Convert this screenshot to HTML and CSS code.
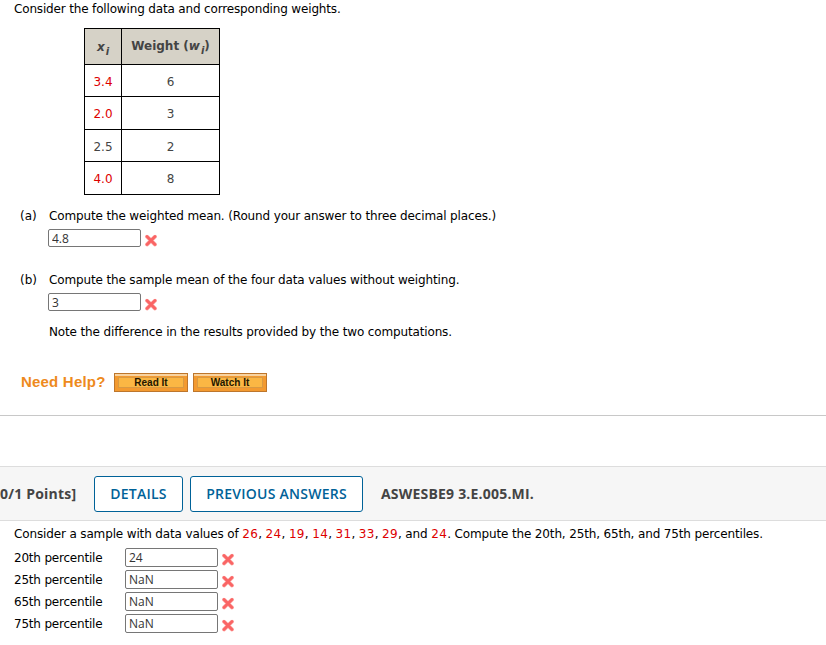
FILE: index.html
```html
<!DOCTYPE html>
<html lang="en">
<head>
    <meta charset="UTF-8">
    <meta name="viewport" content="width=device-width, initial-scale=1.0">
    <title>Assignment Questions</title>
    <link rel="stylesheet" href="styles.css">
</head>
<body>
    <svg class="symbols" width="0" height="0">
        <symbol id="wrong" viewBox="0 0 12 13">
            <path d="M2 2.7 L10 10.5 M10 2.7 L2 10.5" fill="none" stroke="#fcb5b2" stroke-width="3.9" stroke-linecap="round"/>
            <path d="M2 2.6 L10 10.6 M10 2.6 L2 10.6" fill="none" stroke="#fa6464" stroke-width="2.8" stroke-linecap="round"/>
        </symbol>
    </svg>

    <div class="question first">
        <p class="line intro">Consider the following data and corresponding weights.</p>
        <table class="data">
            <tr>
                <th><i>x<sub>i</sub></i></th>
                <th>Weight (<i>w<sub>i</sub></i>)</th>
            </tr>
            <tr><td class="red">3.4</td><td>6</td></tr>
            <tr><td class="red">2.0</td><td>3</td></tr>
            <tr><td>2.5</td><td>2</td></tr>
            <tr><td class="red">4.0</td><td>8</td></tr>
        </table>

        <div class="part">
            <span class="letter">(a)</span>
            <div>
                <p class="line">Compute the weighted mean. (Round your answer to three decimal places.)</p>
                <div class="answer">
                    <input type="text" value="4.8">
                    <svg class="mark"><use href="#wrong"/></svg>
                </div>
            </div>
        </div>
        <div class="part">
            <span class="letter">(b)</span>
            <div>
                <p class="line">Compute the sample mean of the four data values without weighting.</p>
                <div class="answer">
                    <input type="text" value="3">
                    <svg class="mark"><use href="#wrong"/></svg>
                </div>
                <p class="line note">Note the difference in the results provided by the two computations.</p>
            </div>
        </div>

        <div class="help">
            <span class="help-title">Need Help?</span>
            <button class="help-btn">Read It</button>
            <button class="help-btn">Watch It</button>
        </div>
    </div>

    <div class="header">
        <span class="points">0/1 Points]</span>
        <button class="btn details">DETAILS</button>
        <button class="btn previous">PREVIOUS ANSWERS</button>
        <span class="code">ASWESBE9 3.E.005.MI.</span>
    </div>

    <div class="question second">
        <p class="line sample">Consider a sample with data values of <b>26</b>, <b>24</b>, <b>19</b>, <b>14</b>, <b>31</b>, <b>33</b>, <b>29</b>, and <b>24</b>. Compute the 20th, 25th, 65th, and 75th percentiles.</p>
        <div class="row">
            <label>20th percentile</label>
            <input type="text" value="24">
            <svg class="mark"><use href="#wrong"/></svg>
        </div>
        <div class="row">
            <label>25th percentile</label>
            <input type="text" value="NaN">
            <svg class="mark"><use href="#wrong"/></svg>
        </div>
        <div class="row">
            <label>65th percentile</label>
            <input type="text" value="NaN">
            <svg class="mark"><use href="#wrong"/></svg>
        </div>
        <div class="row">
            <label>75th percentile</label>
            <input type="text" value="NaN">
            <svg class="mark"><use href="#wrong"/></svg>
        </div>
    </div>
</body>
</html>
```
FILE: styles.css
```css
* {
    box-sizing: border-box;
}
body {
    margin: 0;
    height: 645px;
    overflow: hidden;
    background: #fff;
    color: #000;
    font-family: Verdana, "DejaVu Sans", sans-serif;
    font-size: 12px;
}
.symbols {
    display: block;
}
.line {
    margin: 0;
    line-height: 18px;
    letter-spacing: -0.14px;
    white-space: nowrap;
}
.intro {
    letter-spacing: -0.16px;
}
.question {
    padding-left: 14px;
}
.first {
    height: 416px;
    border-bottom: 1px solid #c8c8c8;
}
.data {
    width: 136px;
    margin: 10px 0 12px 70px;
    border-collapse: collapse;
    table-layout: fixed;
    color: #444;
    text-align: center;
}
.data th,
.data td {
    height: 32px;
    padding: 2px 0 0;
    border: 1px solid #000;
    line-height: 18px;
}
.data tr:nth-child(odd) td {
    height: 33px;
}
.data th {
    height: 36px;
    padding: 0 0 2px;
    background: #d6d2c7;
    white-space: nowrap;
}
.data th:first-child {
    width: 37px;
    padding: 0;
}
.data sub {
    margin-left: 1px;
    font-size: 10px;
    line-height: 0;
    vertical-align: -4px;
}
.data .red,
.sample b {
    color: #d00;
    font-weight: normal;
}
.part {
    display: flex;
    margin-bottom: 24px;
}
.letter {
    width: 35px;
    padding-left: 6px;
    line-height: 18px;
}
input {
    width: 93px;
    height: 18px;
    padding: 0 3px;
    border: 1px solid #767676;
    border-radius: 2px;
    background: #fff;
    color: #333;
    font-family: "Open Sans", sans-serif;
    font-size: 12px;
}
.answer {
    display: flex;
    height: 18px;
    margin: 4px 0 0 -1px;
}
.mark {
    width: 12px;
    height: 13px;
    margin: 5px 0 0 4px;
}
.note {
    margin-top: 12px;
}
.help {
    display: flex;
    align-items: center;
    gap: 5px;
    margin-top: 32px;
    padding-left: 7px;
}
.help-title {
    width: 88px;
    padding-bottom: 1px;
    color: #ee8a1d;
    font: bold 15px/18px "Liberation Sans", Arial, sans-serif;
    letter-spacing: 0.2px;
    white-space: nowrap;
}
.help-btn {
    width: 74px;
    height: 19px;
    padding: 0;
    border: 1px solid #bd762c;
    background: #fbb744;
    box-shadow: inset 0 2px #f8d3a0, inset 0 0 0 3px #f39a30, inset 0 0 0 4px #d99a43;
    color: #221600;
    font: bold 10px/17px "Liberation Sans", Arial, sans-serif;
}
.header {
    display: flex;
    align-items: center;
    height: 55px;
    margin-top: 50px;
    border-top: 1px solid #ddd;
    border-bottom: 1px solid #ddd;
    background: #f6f6f6;
    color: #444;
    font: bold 14px "Open Sans", sans-serif;
    letter-spacing: 0.2px;
    white-space: nowrap;
}
.points {
    width: 94px;
}
.btn {
    height: 36px;
    margin-right: 7px;
    padding: 0;
    border: 1px solid #006298;
    border-radius: 3px;
    background: #fff;
    color: #006298;
    font: 600 14px "Open Sans", sans-serif;
    letter-spacing: 0.25px;
}
.details {
    width: 89px;
}
.previous {
    width: 173px;
    margin-right: 18px;
}
.second {
    padding-top: 4px;
}
.sample {
    margin-bottom: 5px;
}
.sample b {
    letter-spacing: 0.33px;
}
.row {
    display: flex;
    height: 22px;
}
.row label {
    width: 111px;
    line-height: 20px;
    letter-spacing: -0.2px;
}
.row input {
    height: 19px;
}
```
